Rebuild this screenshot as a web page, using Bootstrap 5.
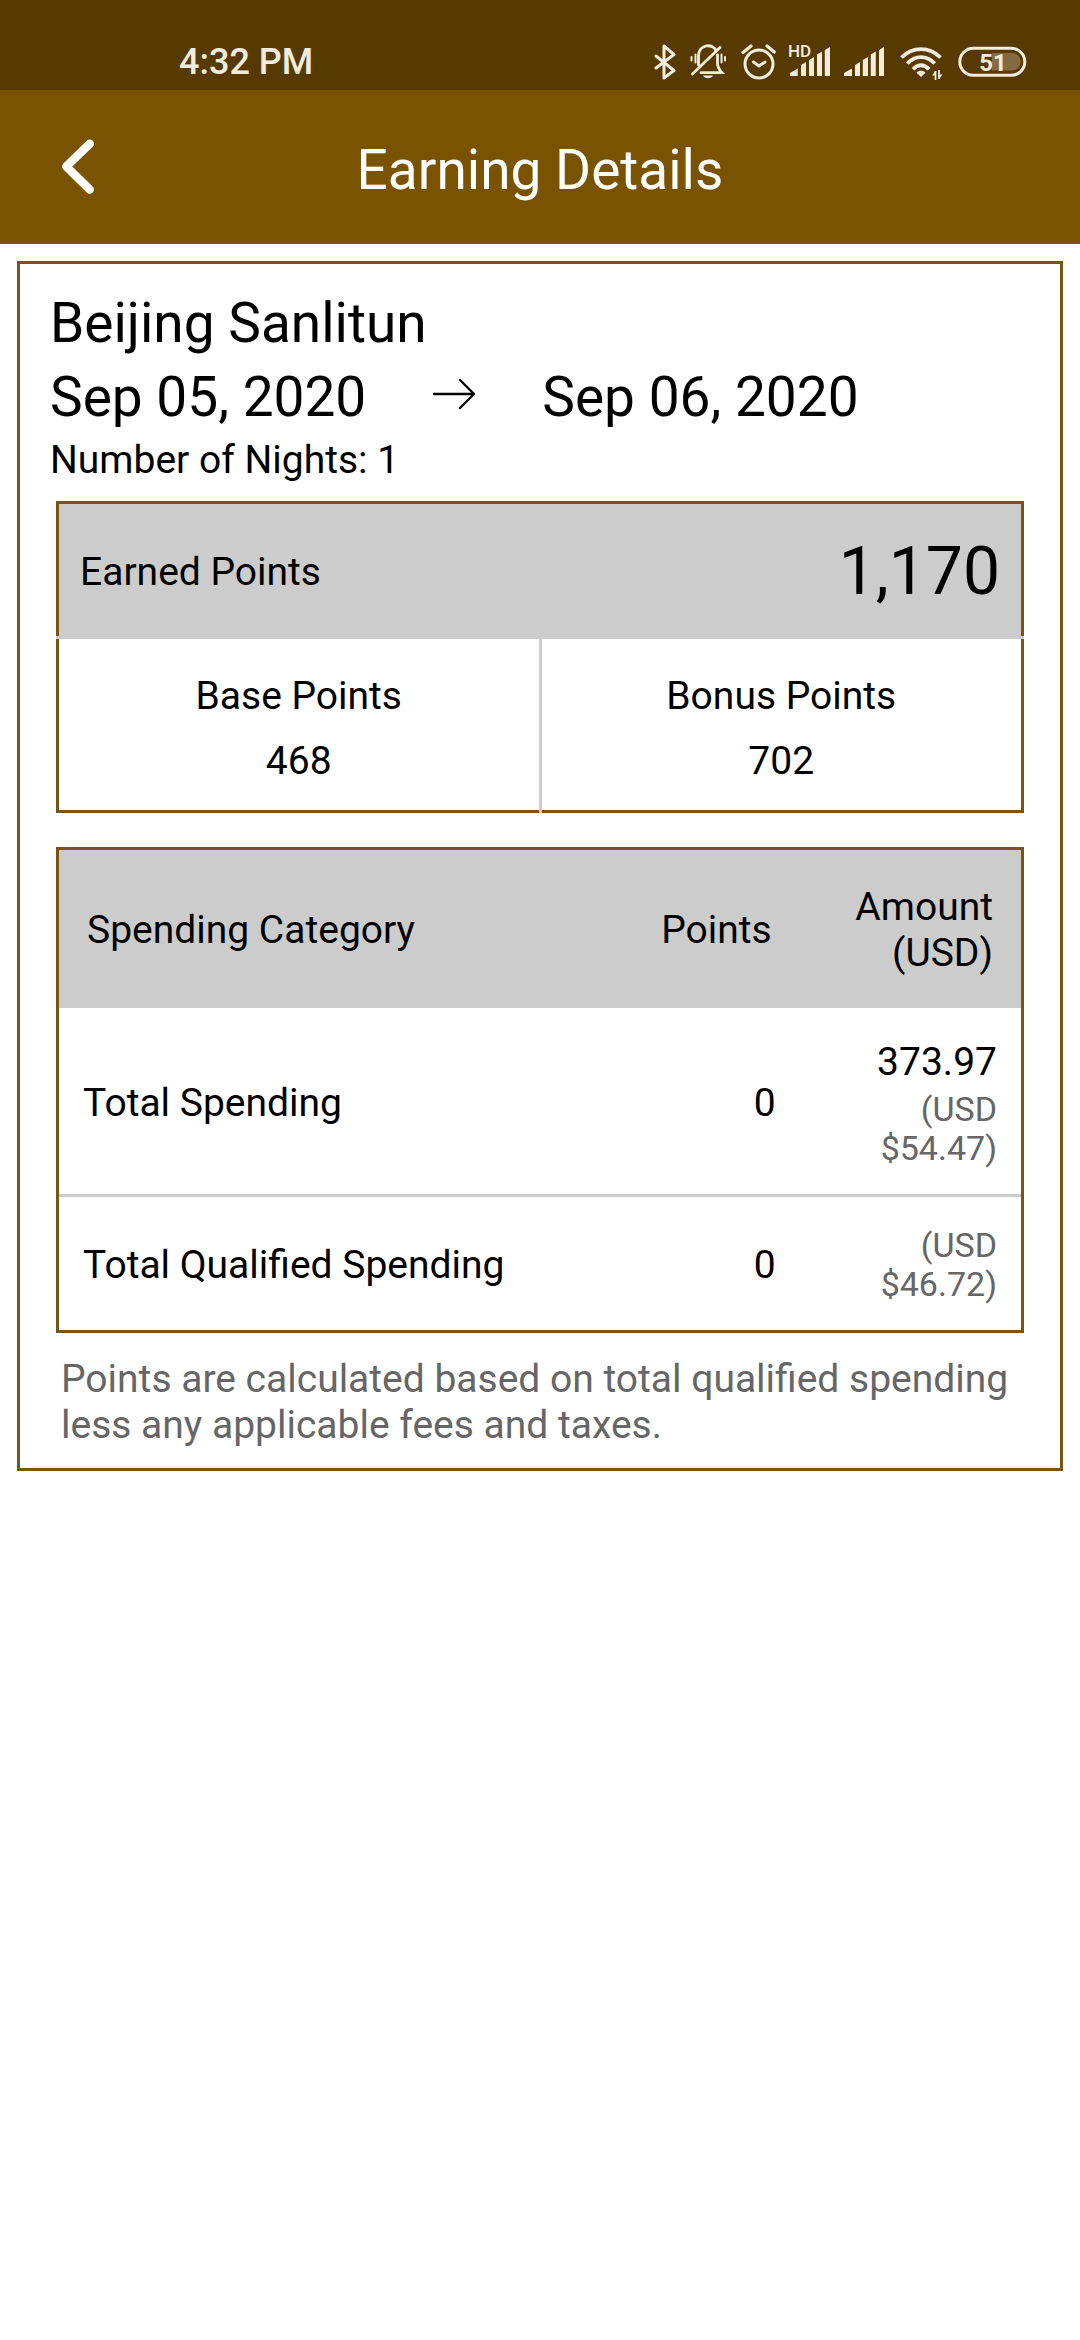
<!DOCTYPE html>
<html lang="en">
<head>
<meta charset="utf-8">
<meta name="viewport" content="width=device-width, initial-scale=1">
<title>Earning Details</title>
<link rel="stylesheet" href="https://cdn.jsdelivr.net/npm/bootstrap@5.3.0/dist/css/bootstrap.min.css">
<script src="https://cdn.jsdelivr.net/npm/bootstrap@5.3.0/dist/js/bootstrap.bundle.min.js"></script>
<style>
  :root { --brand: #7a5300; --brand-dark: #573a00; --edge: #785510; --tint: #ccc; --soft: #666; --status: #f2ece0; }
  body { font-family: Roboto, "Liberation Sans", sans-serif; font-size: 39px; line-height: 46px; color: #000; }
  .status-bar { background: var(--brand-dark); color: var(--status); height: 90px; padding: 34px 52px 0 179px; }
  .status-time { font-size: 36px; font-weight: 500; line-height: 56px; }
  .status-icons { gap: 12px; padding-top: 8px; }
  .status-icons svg { display: block; height: 40px; }
  .app-bar { background: var(--brand); height: 154px; }
  .app-bar h1 { font-size: 55px; line-height: 64px; padding-top: 48px; }
  .back-btn { padding: 49px 60px; border: 0; }
  .back-btn svg { display: block; }
  .stay-card { margin: 17px; border: 3px solid var(--edge); padding: 22px 30px 20px; }
  .stay-line { font-size: 55px; line-height: 74px; }
  .stay-dates { gap: 67px; }
  .nights { line-height: 50px; padding-top: 1px; }
  .points-box { margin: 16px 6px 34px; }
  .points-head { border: 3px solid var(--edge); border-bottom: 0; background: var(--tint); padding: 4px 21px 0; height: 135px; }
  .points-total { font-size: 66px; line-height: 78px; }
  .points-rule { height: 3px; background: var(--tint); }
  .points-split { width: 3px; background: var(--tint); }
  .points-cell { border: 0 solid var(--edge); border-bottom-width: 3px; padding: 25px 0 16px; line-height: 65px; }
  .points-cell:first-child { border-left-width: 3px; }
  .points-cell:last-child { border-right-width: 3px; }
  .spend-box { margin: 0 6px 23px; border: 3px solid var(--edge); }
  .spend-table { width: 100%; table-layout: fixed; }
  .spend-table th { font-weight: 400; }
  .spend-table thead th { background: var(--tint); padding: 34px 28px 32px; }
  .spend-table tbody th, .spend-table tbody td { padding: 29px 24px 26px; }
  .spend-table tbody tr + tr { border-top: 3px solid var(--tint); }
  .local-amount { line-height: 50px; margin-bottom: 3px; }
  .usd-amount { font-size: 34px; line-height: 39px; color: var(--soft); }
  .col-points { width: 20%; }
  .col-amount { width: 23%; }
  .footnote { color: var(--soft); padding: 0 5px 0 11px; }
</style>
</head>
<body class="bg-white">

<div class="status-bar d-flex justify-content-between">
  <div class="status-time">4:32 PM</div>
  <div class="status-icons d-flex align-items-start">
    <svg width="23" height="40" viewBox="0 0 23 40" fill="none" stroke="currentColor" stroke-width="3" stroke-linejoin="round" stroke-linecap="round" role="img" aria-label="Bluetooth"><path d="M2 14 20 28.500 10 36V4L20 12.500 2 26"/></svg>
    <svg width="38" height="40" viewBox="0 0 38 40" fill="none" stroke="currentColor" stroke-width="2.800" stroke-linecap="round" role="img" aria-label="Silent">
      <path d="M9.500 23V14.500C9.500 1 25 1.500 27 9M28.500 13v8c0 4 1 6 4.500 9.700H12"/><path d="M31 5.500 3.500 32"/><path d="M6.500 12.500v8M2.500 15v3.500M32.500 12.500v8M36 15v3.500" stroke-width="2"/><path d="M14 33.500h10c-1.500 3.500-8.500 3.500-10 0z" fill="currentColor" stroke="none"/></svg>
    <svg width="37" height="40" viewBox="0 0 37 40" fill="none" stroke="currentColor" stroke-width="3" stroke-linecap="round" stroke-linejoin="round" role="img" aria-label="Alarm"><circle cx="20" cy="22" r="14"/><path d="m14.500 20 5.500 4 6-4"/><path d="m4 10.500 8-6.500M28 4l7.200 6" stroke-width="3.300"/></svg>
    <svg width="44" height="40" viewBox="0 0 44 40" fill="currentColor" role="img" aria-label="HD signal"><text x="0" y="15" font-family="Roboto, sans-serif" font-weight="500" font-size="17">HD</text><path d="M2 34v-3l7.700-4.500V34zM13 34V23l5-3v14zM21 34V18l5-3v19zM29 34V12.500l5-3V34zM36.800 34V8l5.200-3v29z"/></svg>
    <svg width="44" height="40" viewBox="0 0 44 40" fill="currentColor" role="img" aria-label="Signal"><path d="M0 34v-3l8-4.500V34zM11 34V23l5-3v14zM18.800 34V18l5.200-3v19zM26.800 34V12.500l5-3V34zM35 34V8l5-3v29z"/></svg>
    <svg width="44" height="40" viewBox="0 0 44 40" fill="none" stroke="currentColor" stroke-width="3.900" role="img" aria-label="Wi-Fi"><path d="M1.500 15.500c11-11.200 28-11.200 39 0M7.300 21.500c8-8.500 19.400-8.500 27.400 0M13 27.300c5-5.500 11-5.500 16 0"/><path d="m21 35-4.500-4.200c2.500-2.600 6.500-2.600 9 0z" fill="currentColor" stroke="none"/><path d="M35.500 29v9M39 28v9" stroke-width="1.800"/><path d="M32 33.500 35.500 29v4.500zM42.500 32.500 39 37v-4.500z" fill="currentColor" stroke="none"/></svg>
    <svg width="72" height="40" viewBox="0 0 72 40" role="img" aria-label="Battery 51%"><path d="M36 11h20a8.800 8.800 0 0 1 0 17.600H36z" fill="#836b41"/><rect x="3.800" y="6.300" width="65" height="27" rx="13.500" fill="none" stroke="currentColor" stroke-width="3"/><text x="37" y="29" text-anchor="middle" font-family="Roboto, sans-serif" font-weight="700" font-size="24" fill="currentColor">51</text></svg>
  </div>
</div>

<header class="app-bar position-relative text-white">
  <h1 class="m-0 text-center fw-normal">Earning Details</h1>
  <button type="button" class="back-btn position-absolute top-0 start-0 bg-transparent text-white" aria-label="Back">
    <svg width="36" height="56" viewBox="0 0 36 56" fill="none" stroke="currentColor" stroke-width="8.500" stroke-linecap="round" stroke-linejoin="round"><path d="M29.700 4.700 6.300 27.500l23.400 23"/></svg>
  </button>
</header>

<main class="stay-card">
  <h2 class="stay-line m-0 fw-normal">Beijing Sanlitun</h2>
  <div class="stay-line stay-dates d-flex align-items-center">
    <span>Sep 05, 2020</span>
    <svg width="42" height="36" viewBox="0 0 42 36" fill="none" stroke="currentColor" stroke-width="2.400" stroke-linecap="round" stroke-linejoin="round" role="img" aria-label="to"><path d="M1 15h40M27 1l14 14-14 14"/></svg>
    <span>Sep 06, 2020</span>
  </div>
  <div class="nights">Number of Nights: 1</div>

  <section class="points-box">
    <div class="points-head d-flex justify-content-between align-items-center">
      <span>Earned Points</span>
      <span class="points-total">1,170</span>
    </div>
    <div class="points-rule"></div>
    <div class="d-flex text-center">
      <div class="points-cell flex-fill w-50"><div>Base Points</div><div>468</div></div>
      <div class="points-split flex-shrink-0"></div>
      <div class="points-cell flex-fill w-50"><div>Bonus Points</div><div>702</div></div>
    </div>
  </section>

  <div class="spend-box">
    <table class="spend-table align-middle">
      <thead>
        <tr><th scope="col">Spending Category</th><th scope="col" class="col-points text-end">Points</th><th scope="col" class="col-amount text-end">Amount (USD)</th></tr>
      </thead>
      <tbody>
        <tr>
          <th scope="row">Total Spending</th>
          <td class="text-end">0</td>
          <td class="text-end"><div class="local-amount">373.97</div><div class="usd-amount">(USD $54.47)</div></td>
        </tr>
        <tr>
          <th scope="row">Total Qualified Spending</th>
          <td class="text-end">0</td>
          <td class="text-end"><div class="usd-amount">(USD $46.72)</div></td>
        </tr>
      </tbody>
    </table>
  </div>

  <p class="footnote m-0">Points are calculated based on total qualified spending less any applicable fees and taxes.</p>
</main>
</body>
</html>
